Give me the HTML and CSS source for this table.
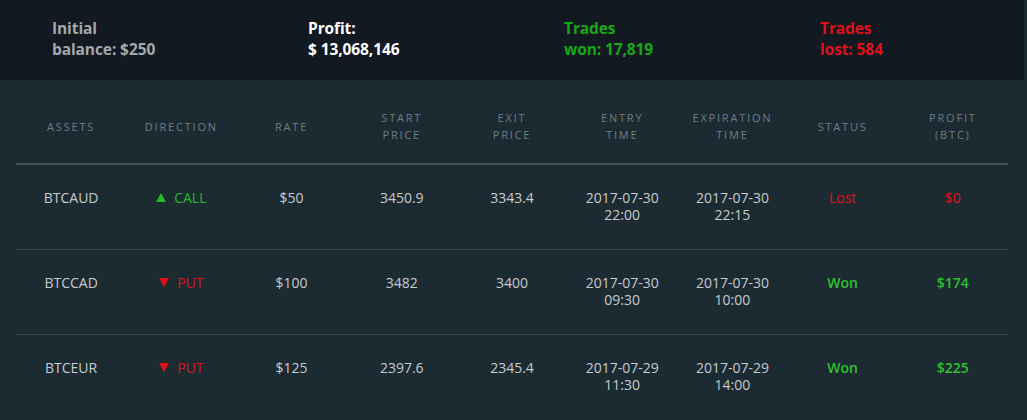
FILE: index.html
```html
<!DOCTYPE html>
<html>
<head>
<meta charset="utf-8">
<link rel="stylesheet" href="styles.css">
</head>
<body>
<div class="summary">
  <div class="stat stat-muted">Initial<br>balance: $250</div>
  <div class="stat stat-white">Profit:<br>$ 13,068,146</div>
  <div class="stat stat-green">Trades<br>won: 17,819</div>
  <div class="stat stat-red">Trades<br>lost: 584</div>
</div>
<div class="content">
  <table class="trades">
    <thead>
      <tr>
        <th>Assets</th>
        <th>Direction</th>
        <th>Rate</th>
        <th>Start<br>price</th>
        <th>Exit<br>price</th>
        <th>Entry<br>time</th>
        <th>Expiration<br>time</th>
        <th>Status</th>
        <th>Profit<br>(BTC)</th>
      </tr>
    </thead>
    <tbody>
      <tr>
        <td>BTCAUD</td>
        <td class="up"><span class="arrow arrow-up"></span>CALL</td>
        <td>$50</td>
        <td>3450.9</td>
        <td>3343.4</td>
        <td>2017-07-30<br>22:00</td>
        <td>2017-07-30<br>22:15</td>
        <td class="lost">Lost</td>
        <td class="lost">$0</td>
      </tr>
      <tr>
        <td>BTCCAD</td>
        <td class="down"><span class="arrow arrow-down"></span>PUT</td>
        <td>$100</td>
        <td>3482</td>
        <td>3400</td>
        <td>2017-07-30<br>09:30</td>
        <td>2017-07-30<br>10:00</td>
        <td class="won">Won</td>
        <td class="won">$174</td>
      </tr>
      <tr>
        <td>BTCEUR</td>
        <td class="down"><span class="arrow arrow-down"></span>PUT</td>
        <td>$125</td>
        <td>2397.6</td>
        <td>2345.4</td>
        <td>2017-07-29<br>11:30</td>
        <td>2017-07-29<br>14:00</td>
        <td class="won">Won</td>
        <td class="won">$225</td>
      </tr>
    </tbody>
  </table>
</div>
</body>
</html>
```

FILE: styles.css
```css
* { box-sizing: border-box; }
html, body {
  margin: 0;
  padding: 0;
  background: #1c2a32;
  font-family: "Open Sans", "Noto Sans", sans-serif;
  overflow: hidden;
}
.summary {
  display: grid;
  grid-template-columns: repeat(4, 1fr);
  height: 80px;
  background: #121920;
  margin-right: 3px;
  padding-top: 18px;
}
.stat {
  padding-left: 52px;
  font-weight: 700;
  font-size: 15.5px;
  line-height: 21px;
  letter-spacing: -0.1px;
}
.stat-muted { color: #a2a8ab; }
.stat-white { color: #ffffff; }
.stat-green { color: #17a81a; }
.stat-red { color: #e0101a; }

.content {
  padding: 0 19px 0 16px;
}
.trades {
  width: 100%;
  border-collapse: collapse;
  table-layout: fixed;
}
.trades th {
  font-weight: 400;
  font-size: 11px;
  letter-spacing: 1.8px;
  text-transform: uppercase;
  color: #6f7d84;
  line-height: 17px;
  padding: 29px 0 20px;
  border-bottom: 2px solid #465258;
  vertical-align: middle;
}
.trades td {
  text-align: center;
  vertical-align: top;
  font-size: 14px;
  line-height: 17px;
  color: #c6cbce;
  padding: 24px 0 26px;
  border-bottom: 1px solid #394950;
}
.trades tbody tr:last-child td { border-bottom: none; }
.trades td.up { color: #22bd22; }
.trades td.down { color: #e0101a; }
.trades td.won { color: #2fc12f; font-weight: 600; }
.trades td.lost { color: #e0101a; }
.arrow {
  display: inline-block;
  width: 0;
  height: 0;
  border-left: 5px solid transparent;
  border-right: 5px solid transparent;
  margin-right: 8px;
  vertical-align: 1px;
}
.arrow-up { border-bottom: 9px solid #22bd22; }
.arrow-down { border-top: 9px solid #e0101a; }
```
